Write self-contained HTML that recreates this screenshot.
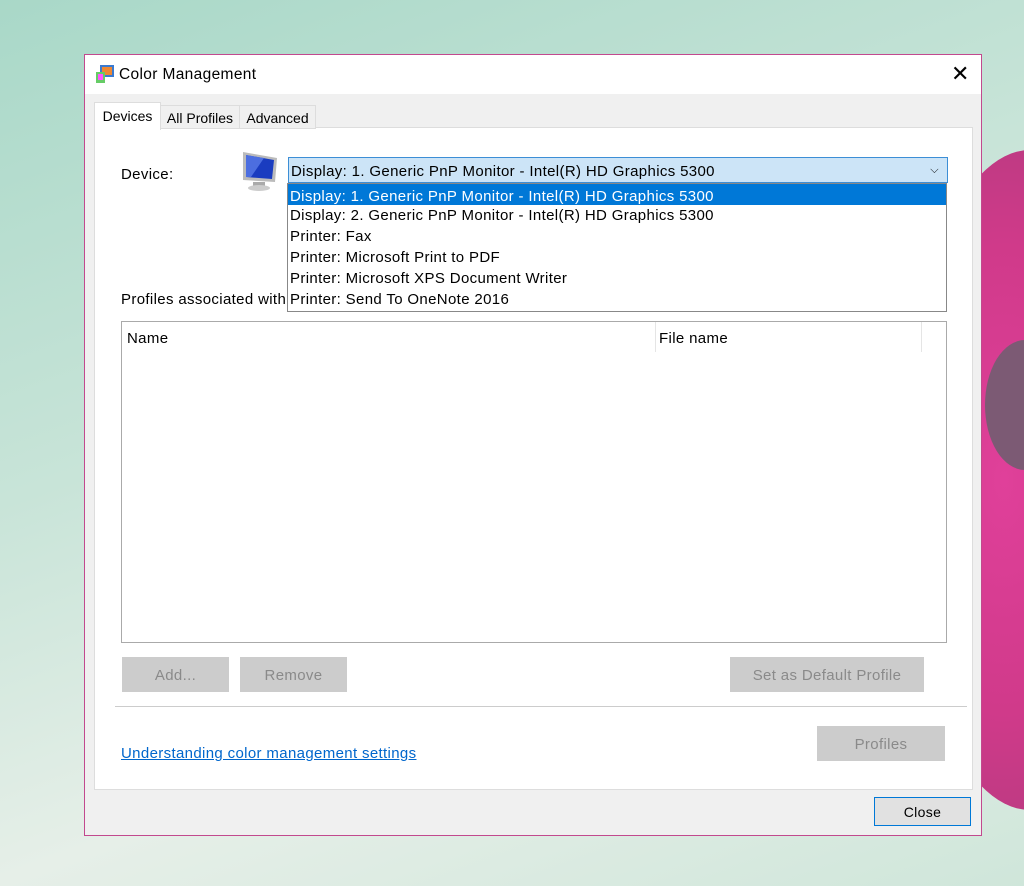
<!DOCTYPE html>
<html><head><style>
body{margin:0;width:1024px;height:886px;overflow:hidden;position:relative;font-family:"Liberation Sans",sans-serif;font-size:15px;letter-spacing:.35px;
background:linear-gradient(160deg,#a9d8c8 0%,#c8e4d8 40%,#e6efe8 70%,#cfe6da 100%);}
.flower{position:absolute;left:900px;top:150px;width:260px;height:660px;border-radius:50%;background:radial-gradient(ellipse at 40% 50%,#e0409a 0%,#d03a8a 50%,#b83a80 80%,#c7e3d6 100%);}
.a{position:absolute}
.win{left:84px;top:54px;width:896px;height:780px;border:1px solid #c2498e;background:#f0f0f0;}
.btn{position:absolute;background:#cccccc;color:#8a8a8a;text-align:center;font-size:15px}
</style></head><body>
<div class="flower"></div>
<div class="flower" style="left:985px;top:340px;width:80px;height:130px;background:#7c5a74"></div>
<div class="a win">
 <div class="a" style="left:0;top:0;width:896px;height:39px;background:#fff"></div>
 <svg class="a" style="left:10px;top:9px" width="20" height="20"><rect x="5" y="1" width="14" height="12" fill="#3a7ad0"/><rect x="7" y="3" width="10" height="8" fill="#e83"/><rect x="1" y="8" width="9" height="11" fill="#6c6"/><rect x="3" y="10" width="5" height="6" fill="#f5f"/></svg>
 <div class="a" style="left:34px;top:11px;font-size:15.5px;color:#000">Color Management</div>
 <div class="a" style="left:866px;top:6px;font-size:22px">✕</div>
 <div class="a" style="left:9px;top:72px;width:877px;height:661px;background:#fff;border:1px solid #ddd"></div>
 <div class="a" style="left:9px;top:47px;width:65px;height:27px;background:#fff;border:1px solid #ddd;border-bottom:none;font-size:14px;line-height:26px;text-align:center;letter-spacing:0">Devices</div>
 <div class="a" style="left:75px;top:50px;width:78px;height:22px;background:#f0f0f0;border:1px solid #ddd;font-size:14px;line-height:24px;text-align:center;letter-spacing:0">All Profiles</div>
 <div class="a" style="left:154px;top:50px;width:75px;height:22px;background:#f0f0f0;border:1px solid #ddd;font-size:14px;line-height:24px;text-align:center;letter-spacing:0">Advanced</div>
 <div class="a" style="left:36px;top:111px">Device:</div>
 <svg class="a" style="left:154px;top:95px" width="42" height="42"><polygon points="4,2 38,8 36,32 4,30" fill="#bbb"/><polygon points="7,5 35,10 33,29 7,27" fill="#1a3cc0"/><polygon points="7,5 25,8 12,27 7,27" fill="#4c6ee0"/><rect x="14" y="32" width="12" height="4" fill="#aaa"/><ellipse cx="20" cy="38" rx="11" ry="3" fill="#ccc"/></svg>
 <div class="a" style="left:203px;top:102px;width:656px;height:24px;background:#cce4f7;border:1px solid #3c8ed6;line-height:27px;padding-left:2px">Display: 1. Generic PnP Monitor - Intel(R) HD Graphics 5300<span style="position:absolute;right:8px;font-size:11px;line-height:24px">⌵</span></div>
 <div class="a" style="left:36px;top:236px">Profiles associated with</div>
 <div class="a" style="left:202px;top:128px;width:658px;height:127px;background:#fff;border:1px solid #888;line-height:21px">
  <div style="background:#0078d7;color:#fff;padding-left:2px;padding-top:2px;height:19px">Display: 1. Generic PnP Monitor - Intel(R) HD Graphics 5300</div>
  <div style="padding-left:2px">Display: 2. Generic PnP Monitor - Intel(R) HD Graphics 5300</div>
  <div style="padding-left:2px">Printer: Fax</div>
  <div style="padding-left:2px">Printer: Microsoft Print to PDF</div>
  <div style="padding-left:2px">Printer: Microsoft XPS Document Writer</div>
  <div style="padding-left:2px">Printer: Send To OneNote 2016</div>
 </div>
 <div class="a" style="left:36px;top:266px;width:824px;height:320px;border:1px solid #aaa;background:#fff">
  <div class="a" style="left:5px;top:8px">Name</div>
  <div class="a" style="left:533px;top:0;height:30px;border-left:1px solid #e5e5e5"></div>
  <div class="a" style="left:537px;top:8px">File name</div>
  <div class="a" style="left:799px;top:0;height:30px;border-left:1px solid #e5e5e5"></div>
 </div>
 <div class="btn" style="left:37px;top:602px;width:107px;height:35px;line-height:37px">Add...</div>
 <div class="btn" style="left:155px;top:602px;width:107px;height:35px;line-height:37px">Remove</div>
 <div class="btn" style="left:645px;top:602px;width:194px;height:35px;line-height:37px">Set as Default Profile</div>
 <div class="a" style="left:30px;top:651px;width:852px;border-top:1px solid #ccc"></div>
 <div class="a" style="left:36px;top:690px;color:#0066cc;text-decoration:underline">Understanding color management settings</div>
 <div class="btn" style="left:732px;top:671px;width:128px;height:35px;line-height:37px">Profiles</div>
 <div class="a" style="left:789px;top:742px;width:95px;height:27px;border:1px solid #0078d7;background:#e1e1e1;text-align:center;line-height:29px;font-size:14px">Close</div>
</div>
</body></html>
